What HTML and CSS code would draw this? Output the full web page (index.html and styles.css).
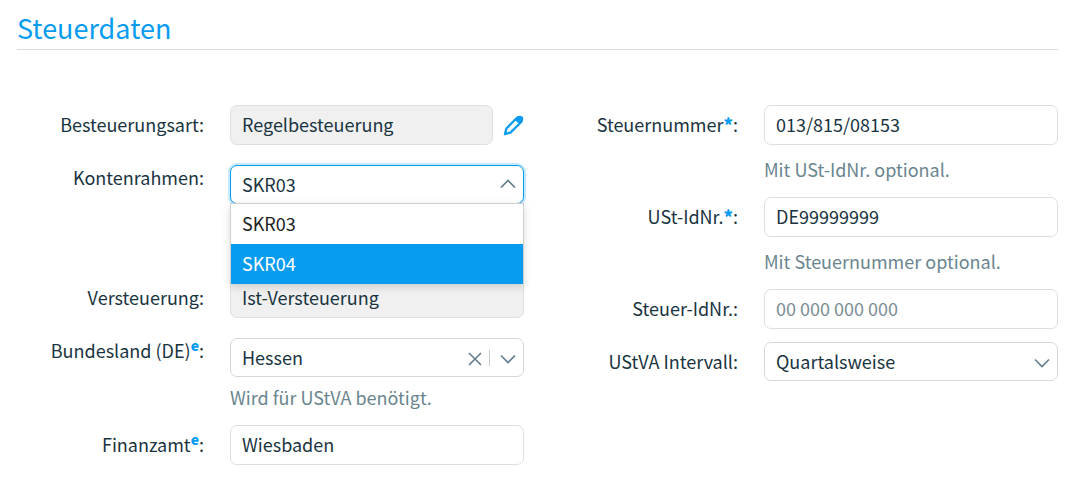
FILE: index.html
```html
<!DOCTYPE html>
<html lang="de">
<head>
    <meta charset="UTF-8">
    <meta name="viewport" content="width=device-width, initial-scale=1.0">
    <title>Steuerdaten</title>
    <link rel="stylesheet" href="styles.css">
</head>
<body>
    <h1>Steuerdaten</h1>

    <form class="columns">
        <div class="column">
            <div class="row locked">
                <label for="besteuerungsart">Besteuerungsart:</label>
                <div class="field with-edit">
                    <input type="text" id="besteuerungsart" value="Regelbesteuerung" readonly>
                    <button type="button" class="edit" aria-label="Besteuerungsart bearbeiten">
                        <svg viewBox="0 0 22 22">
                            <path d="M2 20 L3.6 14.2 L14.4 3.2 Q16.6 1.4 19 3.2 Q20.6 5.4 18.8 7.6 L7.8 18.4 Z" fill="none" stroke="currentColor" stroke-width="2.4" stroke-linejoin="round"/>
                            <path d="M12.4 5 L15.6 1.6 Q18 0 20.4 1.8 Q22.2 4.2 20.4 6.6 L17 9.8 Z" fill="currentColor"/>
                        </svg>
                    </button>
                </div>
            </div>

            <div class="row top">
                <label for="kontenrahmen">Kontenrahmen:</label>
                <div class="field">
                    <div class="select open">
                        <select id="kontenrahmen">
                            <option selected>SKR03</option>
                            <option>SKR04</option>
                        </select>
                        <svg class="arrow" viewBox="0 0 16 10"><path d="M1 8.5 L8 1.5 L15 8.5"/></svg>
                        <ul class="menu" role="listbox" aria-label="Kontenrahmen">
                            <li role="option">SKR03</li>
                            <li role="option" class="active" aria-selected="true">SKR04</li>
                        </ul>
                    </div>
                    <div class="hint two-lines"></div>
                </div>
            </div>

            <div class="row locked">
                <label for="versteuerung">Versteuerung:</label>
                <div class="field">
                    <input type="text" id="versteuerung" value="Ist-Versteuerung" readonly>
                </div>
            </div>

            <div class="row top">
                <label for="bundesland">Bundesland (DE)<sup>e</sup>:</label>
                <div class="field">
                    <div class="select">
                        <select id="bundesland">
                            <option>Hessen</option>
                        </select>
                        <button type="button" class="clear" aria-label="Auswahl entfernen">
                            <svg viewBox="0 0 14 14"><path d="M1 1 L13 13 M13 1 L1 13"/></svg>
                        </button>
                        <svg class="arrow" viewBox="0 0 16 10"><path d="M1 1.5 L8 8.5 L15 1.5"/></svg>
                    </div>
                    <div class="hint">Wird für UStVA benötigt.</div>
                </div>
            </div>

            <div class="row">
                <label for="finanzamt">Finanzamt<sup>e</sup>:</label>
                <div class="field">
                    <input type="text" id="finanzamt" value="Wiesbaden">
                </div>
            </div>
        </div>

        <div class="column">
            <div class="row">
                <label for="steuernummer">Steuernummer<span class="required">*</span>:</label>
                <div class="field">
                    <input type="text" id="steuernummer" value="013/815/08153">
                    <div class="hint">Mit USt-IdNr. optional.</div>
                </div>
            </div>

            <div class="row">
                <label for="ustid">USt-IdNr.<span class="required">*</span>:</label>
                <div class="field">
                    <input type="text" id="ustid" value="DE99999999">
                    <div class="hint">Mit Steuernummer optional.</div>
                </div>
            </div>

            <div class="row">
                <label for="steuerid">Steuer-IdNr.:</label>
                <div class="field">
                    <input type="text" id="steuerid" placeholder="00 000 000 000">
                </div>
            </div>

            <div class="row">
                <label for="intervall">UStVA Intervall:</label>
                <div class="field">
                    <div class="select">
                        <select id="intervall">
                            <option>Quartalsweise</option>
                        </select>
                        <svg class="arrow" viewBox="0 0 16 10"><path d="M1 1.5 L8 8.5 L15 1.5"/></svg>
                    </div>
                </div>
            </div>
        </div>
    </form>
</body>
</html>
```
FILE: styles.css
```css
* {
    margin: 0;
    padding: 0;
    box-sizing: border-box;
}

body {
    padding: 8px 23px 20px 17px;
    font-family: "Noto Sans CJK SC", sans-serif;
    font-size: 18px;
    line-height: 24px;
    color: #193441;
    background: #fff;
}

h1 {
    margin-bottom: 55px;
    padding-bottom: 2px;
    border-bottom: 1px solid #dcdcdc;
    font-size: 27px;
    font-weight: normal;
    line-height: 39px;
    color: #089cf0;
}

.columns {
    display: grid;
    grid-template-columns: 1fr 1fr;
    gap: 27px;
}

.column {
    display: flex;
    flex-direction: column;
    gap: 13px;
}

.row {
    display: grid;
    grid-template-columns: 187px 1fr;
    gap: 26px;
    align-items: start;
}

.row.locked {
    margin-bottom: 7px;
}

label {
    padding-top: 7px;
    text-align: right;
}

.row.top label {
    padding-top: 0;
}

sup,
.required {
    font-weight: 900;
    color: #089cf0;
}

sup {
    font-size: 14px;
    line-height: 0;
}

.field {
    min-width: 0;
}

.with-edit {
    display: flex;
    align-items: center;
    gap: 10px;
}

input,
select {
    display: block;
    width: 100%;
    height: 40px;
    padding: 0 11px 2px;
    border: 1px solid #dce0e2;
    border-radius: 7px;
    font: inherit;
    color: inherit;
    background: #fff;
    outline: none;
}

input[readonly] {
    background: #f0f0f0;
}

input::placeholder {
    color: #7b8e96;
    opacity: 1;
}

.with-edit input {
    flex: 1;
    min-width: 0;
}

.edit {
    width: 21px;
    height: 22px;
    border: none;
    color: #089cf0;
    background: none;
    cursor: pointer;
}

.edit svg,
.clear svg {
    display: block;
    width: 100%;
}

.select {
    position: relative;
}

select {
    height: 39px;
    border-color: #d4d7d9;
    appearance: none;
}

.open select {
    border-color: #089cf0;
    box-shadow: 0 0 0 2px #c5e9fc;
}

.arrow {
    position: absolute;
    top: 16px;
    right: 8px;
    width: 16px;
    height: 10px;
    pointer-events: none;
}

.open .arrow {
    top: 14px;
}

.arrow path,
.clear path {
    fill: none;
    stroke: #607d8b;
    stroke-width: 1.6;
}

.clear {
    position: absolute;
    top: 12px;
    right: 34px;
    width: 22px;
    height: 16px;
    padding: 2px 7px 0 0;
    border: none;
    border-right: 1px solid #c4cdd1;
    background: none;
    cursor: pointer;
}

.menu {
    position: absolute;
    top: 38px;
    left: 0;
    right: 0;
    z-index: 1;
    border: 1px solid #d0d0d0;
    border-bottom: none;
    list-style: none;
    color: #222;
    background: #fff;
    box-shadow: 0 3px 8px rgba(0, 0, 0, 0.15);
}

.menu li {
    padding: 0 11px 2px;
    line-height: 38px;
    cursor: pointer;
}

.menu .active {
    color: #fff;
    background: #089cf0;
}

.hint {
    margin-top: 12px;
    padding-bottom: 3px;
    color: #6b858f;
}

.select + .hint {
    margin-top: 8px;
}

.hint.two-lines {
    min-height: 53px;
}
```
